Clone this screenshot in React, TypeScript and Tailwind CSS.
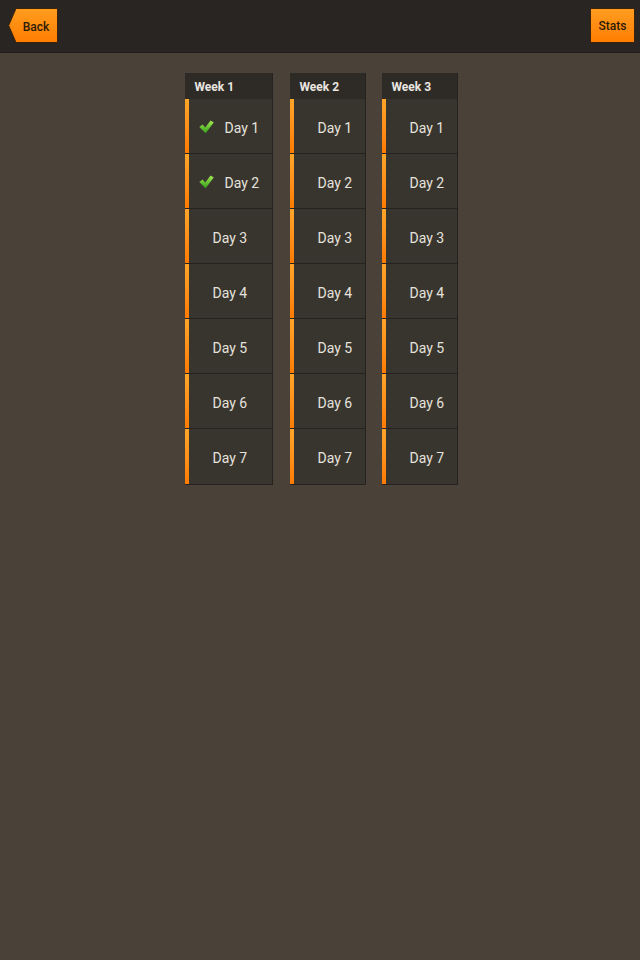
import React from "react";

const weeks = [
  { name: "Week 1", width: "w-[88px]", done: [1, 2] },
  { name: "Week 2", width: "w-[76px]", done: [] as number[] },
  { name: "Week 3", width: "w-[76px]", done: [] as number[] },
];

const Check = () => (
  <svg width="15" height="14" viewBox="0 0 15 14" className="mr-[11px] mb-[2px]">
    <defs>
      <linearGradient id="chk" x1="0" y1="0" x2="0" y2="1">
        <stop offset="0" stopColor="#a6ea52" />
        <stop offset="1" stopColor="#34a01a" />
      </linearGradient>
    </defs>
    <path
      d="M0.3 7 L3.6 4.6 L6.3 7.4 L11.6 0.4 L14.8 2.4 L6.6 13.2 Z"
      fill="url(#chk)"
    />
  </svg>
);

export default function App() {
  return (
    <div
      className="min-h-screen w-[640px] bg-[#4a4238] text-white"
      style={{ fontFamily: "Roboto, 'Noto Sans', sans-serif" }}
    >
      {/* TOP BAR */}
      <div className="h-[53px] bg-[#292522] border-b border-[#1f1c19] flex items-start justify-between pl-[8px] pr-[5px] pt-[8px]">
        <button className="relative w-[50px] h-[35px]">
          <svg width="50" height="35" viewBox="0 0 50 35" className="absolute inset-0">
            <defs>
              <linearGradient id="org" x1="0" y1="0" x2="0" y2="1">
                <stop offset="0" stopColor="#ff9d1f" />
                <stop offset="1" stopColor="#ff7d00" />
              </linearGradient>
            </defs>
            <path
              d="M8 0.5 L49.5 0.5 L49.5 34.5 L8 34.5 L0.7 17.5 Z"
              fill="url(#org)"
              stroke="#3a2308"
              strokeWidth="1"
            />
          </svg>
          <span className="relative pl-[6px] text-[12px] text-[#2b1a05] font-medium">Back</span>
        </button>
        <button className="w-[45px] h-[35px] bg-gradient-to-b from-[#ff9d1f] to-[#ff7d00] border border-[#3a2308] text-[12px] text-[#2b1a05] font-medium">
          Stats
        </button>
      </div>

      {/* WEEKS */}
      <div className="flex justify-center pt-[20px] pl-[2px]">
        <div className="flex gap-[16px]">
          {weeks.map((w, wi) => (
            <div
              key={w.name}
              className={`${w.width} ${wi === 0 ? "mr-[1px]" : ""} border-r border-b border-[#25221f] bg-[#25221f]`}
            >
              <div className="h-[26px] bg-[#2e2b27] flex items-center pl-[10px] pt-[1px] text-[12px] font-bold text-[#eae6e0]">
                {w.name}
              </div>
              {[1, 2, 3, 4, 5, 6, 7].map((d) => {
                const done = w.done.includes(d);
                return (
                  <div
                    key={d}
                    className="h-[55px] flex border-b border-[#25221f] last:border-b-0"
                  >
                    <div className="w-[4px] bg-gradient-to-b from-[#ffa529] to-[#ff7b00]" />
                    <div
                      className={`flex-1 bg-[#38352f] flex items-center pt-[4px] text-[14px] text-[#e6e2dc] ${
                        done ? "pl-[10px]" : "pl-[24px]"
                      }`}
                    >
                      {done && <Check />}
                      Day {d}
                    </div>
                  </div>
                );
              })}
            </div>
          ))}
        </div>
      </div>
    </div>
  );
}
